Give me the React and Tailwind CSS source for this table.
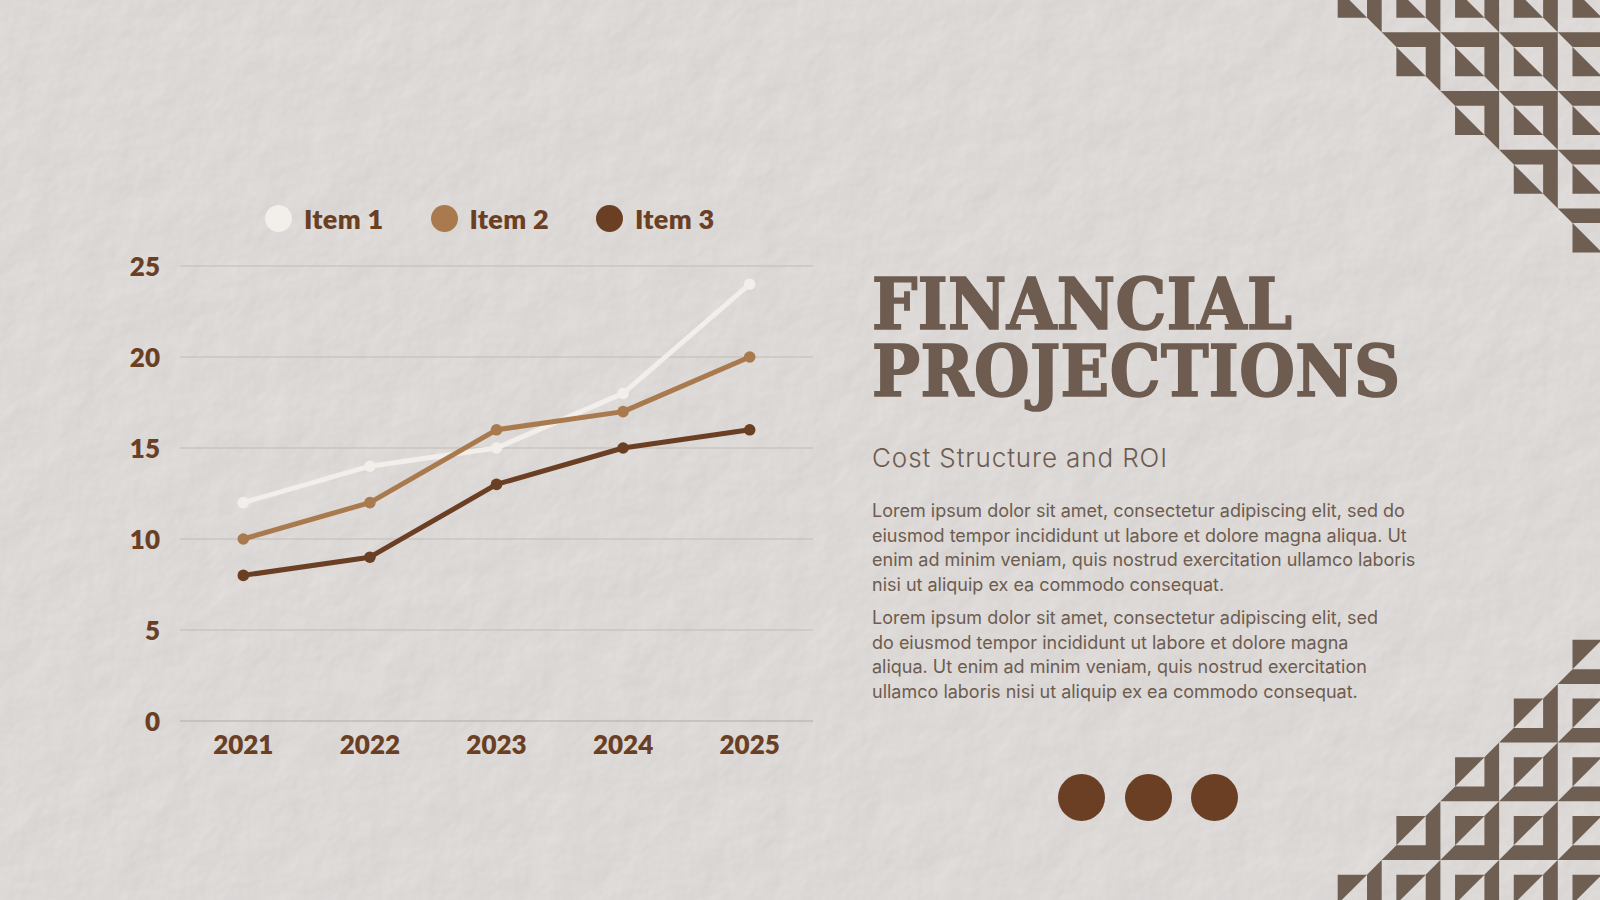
import React from "react";

const S = 58.7;
const A = S / 4;
const B = (3 * S) / 4;

const years = ["2021", "2022", "2023", "2024", "2025"];
const series = [
  { name: "Item 1", color: "#f2eee9", values: [12, 14, 15, 18, 24] },
  { name: "Item 2", color: "#a97a4d", values: [10, 12, 16, 17, 20] },
  { name: "Item 3", color: "#6a3f24", values: [8, 9, 13, 15, 16] },
];

const PLOT_W = 633;
const PLOT_H = 455;
const px = (i) => (PLOT_W / 5) * (i + 0.5);
const py = (v) => PLOT_H - (v * PLOT_H) / 25;

// one square of the corner pattern: brown half-square with a small inverted square in the middle
const Tile = ({ x, y }) => (
  <g>
    <path
      d={`M${x} ${y}H${x + S}V${y + S}Z M${x + A} ${y + A}H${x + B}V${y + B}Z`}
      fillRule="evenodd"
    />
    <path d={`M${x + A} ${y + A}V${y + B}H${x + B}Z`} />
  </g>
);

const tiles = [];
for (let j = -1; j <= 3; j++) {
  for (let i = j; i <= 4; i++) {
    tiles.push({ key: `${i}-${j}`, x: 51.7 + S * i, y: 32.3 + S * j });
  }
}

const CornerPattern = ({ flip }) => (
  <svg
    width="270"
    height={flip ? 270 : 260}
    viewBox={`0 0 270 ${flip ? 270 : 260}`}
    className="block"
  >
    <g fill="#6f5f52" transform={flip ? "translate(0 262.3) scale(1 -1)" : undefined}>
      {tiles.map((t) => (
        <Tile key={t.key} x={t.x} y={t.y} />
      ))}
    </g>
  </svg>
);

// paper grain behind everything
const PaperTexture = () => (
  <svg width="1600" height="900" className="absolute inset-0 block">
    <filter
      id="paper"
      x="0"
      y="0"
      width="100%"
      height="100%"
      colorInterpolationFilters="sRGB"
    >
      <feTurbulence type="fractalNoise" baseFrequency="0.022" numOctaves="4" seed="7" />
      <feDiffuseLighting lightingColor="#fefaf8" surfaceScale="0.5">
        <feDistantLight azimuth="225" elevation="60" />
      </feDiffuseLighting>
    </filter>
    <rect width="1600" height="900" filter="url(#paper)" />
  </svg>
);

const LineChart = () => (
  <div className="flex flex-col font-['Lato',sans-serif] font-extrabold text-[#6a3f24]">
    <div className="flex items-center gap-[47px] ml-[165px] h-[28px]">
      {series.map((s) => (
        <div key={s.name} className="flex items-center gap-[12px]">
          <span
            className="block w-[27px] h-[27px] rounded-full"
            style={{ backgroundColor: s.color }}
          />
          <span className="text-[27px] leading-none tracking-[0.3px]">{s.name}</span>
        </div>
      ))}
    </div>

    <div className="flex mt-[34px]">
      <div className="flex flex-col justify-between w-[60px] h-[455px] text-[26px] leading-none">
        {[25, 20, 15, 10, 5, 0].map((v) => (
          <div key={v} className="h-0 flex items-center justify-end">
            {v}
          </div>
        ))}
      </div>

      <div className="ml-[20px] w-[633px]">
        <svg width={PLOT_W} height={PLOT_H} className="block overflow-visible">
          {[25, 20, 15, 10, 5, 0].map((v) => (
            <line
              key={v}
              x1="0"
              x2={PLOT_W}
              y1={py(v)}
              y2={py(v)}
              stroke={v === 0 ? "#b5a9a1" : "#c4bbb5"}
              strokeWidth="1.2"
            />
          ))}
          {series.map((s) => (
            <g key={s.name}>
              <polyline
                points={s.values.map((v, i) => `${px(i)},${py(v)}`).join(" ")}
                fill="none"
                stroke={s.color}
                strokeWidth="5"
                strokeLinejoin="round"
              />
              {s.values.map((v, i) => (
                <circle key={i} cx={px(i)} cy={py(v)} r="5.8" fill={s.color} />
              ))}
            </g>
          ))}
        </svg>
        <div className="grid grid-cols-5 mt-[10px] text-[26px] leading-none">
          {years.map((y) => (
            <div key={y} className="text-center">
              {y}
            </div>
          ))}
        </div>
      </div>
    </div>
  </div>
);

export default function App() {
  return (
    <div className="relative w-[1600px] h-[900px] overflow-hidden bg-[#dcd9d7]">
      <PaperTexture />
      <div className="absolute top-0 right-0">
        <CornerPattern />
      </div>
      <div className="absolute bottom-0 right-0">
        <CornerPattern flip />
      </div>

      <div className="relative flex">
        <div className="pl-[100px] pt-[204px]">
          <LineChart />
        </div>

        <div className="ml-[59px] pt-[271px] text-[#6d5c4f]">
          <h1 className="font-['DejaVu_Serif_Condensed','DejaVu_Serif',serif] font-bold text-[71px] tracking-[0.4px] [-webkit-text-stroke:1.6px_#6d5c4f]">
            <span className="block h-[67px] leading-[67px]">FINANCIAL</span>
            <span className="block h-[67px] leading-[67px]">PROJECTIONS</span>
          </h1>
          <p className="mt-[38px] font-['Inter',sans-serif] font-light text-[26px] leading-[30px] tracking-[0.9px]">
            Cost Structure and ROI
          </p>
          <div className="mt-[26px] font-['Inter',sans-serif] text-[18px] leading-[24.5px]">
            <p>
              Lorem ipsum dolor sit amet, consectetur adipiscing elit, sed do
              <br />
              eiusmod tempor incididunt ut labore et dolore magna aliqua. Ut
              <br />
              enim ad minim veniam, quis nostrud exercitation ullamco laboris
              <br />
              nisi ut aliquip ex ea commodo consequat.
            </p>
            <p className="mt-[9px]">
              Lorem ipsum dolor sit amet, consectetur adipiscing elit, sed
              <br />
              do eiusmod tempor incididunt ut labore et dolore magna
              <br />
              aliqua. Ut enim ad minim veniam, quis nostrud exercitation
              <br />
              ullamco laboris nisi ut aliquip ex ea commodo consequat.
            </p>
          </div>
          <div className="mt-[70px] ml-[186px] flex gap-[19.5px]">
            <span className="block w-[47px] h-[47px] rounded-full bg-[#6a3f24]" />
            <span className="block w-[47px] h-[47px] rounded-full bg-[#6a3f24]" />
            <span className="block w-[47px] h-[47px] rounded-full bg-[#6a3f24]" />
          </div>
        </div>
      </div>
    </div>
  );
}
